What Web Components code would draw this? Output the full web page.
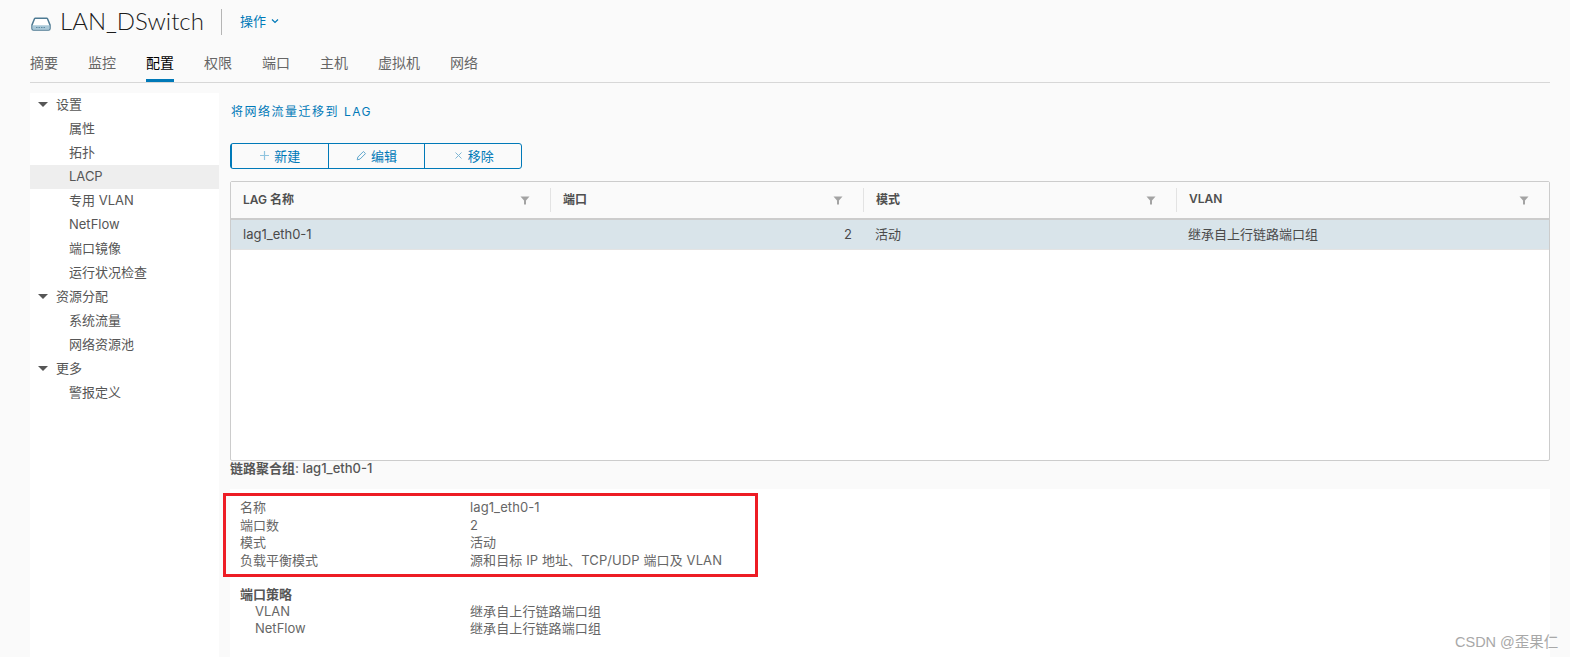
<!DOCTYPE html>
<html lang="zh">
<head>
<meta charset="utf-8">
<title>LAN_DSwitch</title>
<style>
html, body { margin: 0; height: 100%; overflow: hidden; background: #fafafa; }
body { font-family: Inter, "Noto Sans CJK SC", sans-serif; color: #565656; }
</style>
</head>
<body>
<vc-page>
  <vc-header slot="header" title="LAN_DSwitch" action="操作"></vc-header>
  <vc-tabs slot="tabs" items="摘要,监控,配置,权限,端口,主机,虚拟机,网络" active="配置"></vc-tabs>
  <vc-tree slot="side"></vc-tree>
  <vc-lacp slot="main"></vc-lacp>
</vc-page>
<script>
const CJK = 'Inter, "Noto Sans CJK SC", sans-serif';

class VcPage extends HTMLElement {
    constructor() {
        super();
        this.attachShadow({ mode: 'open' }).innerHTML = `
            <style>
            :host { display: block; position: relative; height: 657px; padding-left: 30px; box-sizing: border-box; font-family: ${CJK}; overflow: hidden; }
            .wrap { width: 1520px; }
            .body { display: flex; margin-top: 10px; height: 564px; }
            .wm { position: absolute; left: 1455px; top: 630px; font: 14.500px "Liberation Sans", "Noto Sans CJK SC", sans-serif; color: #a8a8a8; white-space: nowrap; }
            </style>
            <div class="wrap">
                <slot name="header"></slot>
                <slot name="tabs"></slot>
                <div class="body"><slot name="side"></slot><slot name="main"></slot></div>
            </div>
            <div class="wm">CSDN @歪果仁</div>
        `;
    }
}

class VcHeader extends HTMLElement {
    constructor() {
        super();
        this.attachShadow({ mode: 'open' }).innerHTML = `
            <style>
            :host { display: flex; align-items: center; height: 44px; }
            svg.sw { width: 20px; height: 14px; margin: 3px 9px 0 1px; }
            h1 { margin: 0 0 3px; font-family: Lato, Inter, sans-serif; font-size: 24px; font-weight: 300; color: #1b1b1b; width: 161px; line-height: 26px; white-space: nowrap; }
            .sep { width: 1px; height: 26px; background: #b5b5b5; margin-right: 18px; }
            .act { font-size: 13px; color: #0079b8; display: flex; align-items: center; gap: 5px; margin-bottom: 3px; }
            .act svg { width: 8px; height: 6px; }
            </style>
            <svg class="sw" viewBox="0 0 20 14"><path d="M4.500 1.200h11a1 1 0 0 1 1 .6l2.500 6.200v3.500a1.500 1.500 0 0 1-1.500 1.500h-15a1.500 1.500 0 0 1-1.500-1.500V8l2.500-6.200a1 1 0 0 1 1-.6z" fill="#fff" stroke="#4d7a93" stroke-width="1.500"/><path d="M1.500 8.200h17v3.800a.8.800 0 0 1-.8.800H2.300a.8.800 0 0 1-.8-.8z" fill="#a9c8d8"/><path d="M5 10.500h10" stroke="#5f8ba3" stroke-dasharray="1.500 1"/></svg>
            <h1>${this.getAttribute('title')}</h1>
            <div class="sep"></div>
            <div class="act">${this.getAttribute('action')}<svg viewBox="0 0 8 6"><path d="M1 1.500l3 3 3-3" fill="none" stroke="#0079b8" stroke-width="1.200"/></svg></div>
        `;
    }
}

class VcTabs extends HTMLElement {
    constructor() {
        super();
        const active = this.getAttribute('active');
        const tabs = this.getAttribute('items').split(',').map(t =>
            `<div class="tab${t === active ? ' on' : ''}">${t}</div>`).join('');
        this.attachShadow({ mode: 'open' }).innerHTML = `
            <style>
            :host { display: flex; gap: 30px; height: 39px; box-sizing: border-box; border-bottom: 1px solid #d7d7d7; }
            .tab { font-size: 14px; line-height: 38px; height: 38px; box-sizing: border-box; color: #666; }
            .on { color: #000; border-bottom: 3px solid #0079b8; }
            </style>
            ${tabs}
        `;
    }
}

class VcTree extends HTMLElement {
    constructor() {
        super();
        const groups = [
            ['设置', ['属性', '拓扑', 'LACP', '专用 VLAN', 'NetFlow', '端口镜像', '运行状况检查']],
            ['资源分配', ['系统流量', '网络资源池']],
            ['更多', ['警报定义']],
        ];
        const html = groups.map(([name, kids]) => `
            <div class="row group"><i></i>${name}</div>
            ${kids.map(k => `<div class="row kid${k === 'LACP' ? ' sel' : ''}">${k}</div>`).join('')}
        `).join('');
        this.attachShadow({ mode: 'open' }).innerHTML = `
            <style>
            :host { display: block; width: 189px; flex: none; background: #fff; font-size: 13px; color: #565656; }
            .row { height: 24px; line-height: 22px; white-space: nowrap; display: flex; align-items: flex-start; }
            .group { padding-left: 8px; }
            .group i { width: 0; height: 0; margin-top: 9px; border: 5px solid transparent; border-top: 5px solid #565656; border-bottom: 0; margin-right: 8px; }
            .kid { padding-left: 39px; }
            .sel { background: #eee; }
            </style>
            ${html}
        `;
    }
}

class VcButtons extends HTMLElement {
    constructor() {
        super();
        this.attachShadow({ mode: 'open' }).innerHTML = `
            <style>
            :host { display: flex; width: 290px; box-sizing: content-box; height: 24px; border: 1px solid #0079b8; border-radius: 3px; background: #fafafa; }
            .b { flex: 1; display: flex; align-items: center; justify-content: center; gap: 4px; padding-bottom: 2px; font-size: 13px; color: #0079b8; border-left: 1px solid #0079b8; }
            .b:first-child { border-left: 0; }
            svg { width: 11px; height: 11px; }
            </style>
            <div class="b"><svg viewBox="0 0 11 11"><path d="M5.500 1v9M1 5.500h9" stroke="#8fc4df" stroke-width="1.200"/></svg>新建</div>
            <div class="b"><svg viewBox="0 0 11 11"><path d="M1.200 9.800l.7-2.800 5.500-5.500 2.100 2.100-5.500 5.500z" fill="none" stroke="#5ea6cc"/></svg>编辑</div>
            <div class="b"><svg viewBox="0 0 11 11"><path d="M2.500 2.500l6 6M8.500 2.500l-6 6" stroke="#7fb6d4"/></svg>移除</div>
        `;
    }
}

class VcGrid extends HTMLElement {
    constructor() {
        super();
        const filter = `<svg viewBox="0 0 10 9"><path d="M.5.500h9L6 4.500V8.500H4V4.500z" fill="#a3a3a3"/></svg>`;
        const head = ['LAG 名称', '端口', '模式', 'VLAN'].map(t =>
            `<div class="h"><span>${t}</span>${filter}</div>`).join('');
        this.attachShadow({ mode: 'open' }).innerHTML = `
            <style>
            :host { display: block; height: 280px; box-sizing: border-box; border: 1px solid #ccc; border-radius: 2px; background: #fff; font-size: 13px; color: #565656; }
            .row { display: grid; grid-template-columns: 319px 313px 313px 1fr; }
            .head { height: 38px; box-sizing: border-box; background: #fafafa; border-bottom: 2px solid #ccc; align-items: center; }
            .h { height: 24px; box-sizing: border-box; display: flex; align-items: center; justify-content: space-between; padding: 0 20px 3px 12px; border-left: 1px solid #e3e3e3; font-size: 12px; font-weight: 600; color: #4f4f4f; }
            .h:first-child { border-left: 0; padding-left: 12px; }
            .h svg { width: 10px; height: 9px; margin-top: 3px; }
            .body { height: 30px; line-height: 29px; background: #d9e4ea; border-bottom: 1px solid #e3e3e3; box-sizing: border-box; }
            .c { padding: 0 12px; white-space: nowrap; color: #4a4a4a; }
            .num { text-align: right; padding-right: 11px; }
            </style>
            <div class="row head">${head}</div>
            <div class="row body">
                <div class="c">lag1_eth0-1</div>
                <div class="c num">2</div>
                <div class="c">活动</div>
                <div class="c">继承自上行链路端口组</div>
            </div>
        `;
    }
}

class VcDetails extends HTMLElement {
    constructor() {
        super();
        const rows = [
            ['名称', 'lag1_eth0-1'],
            ['端口数', '2'],
            ['模式', '活动'],
            ['负载平衡模式', '源和目标 IP 地址、TCP/UDP 端口及 VLAN'],
        ];
        const row = (k, v, cls = '') => `<div class="r ${cls}"><div>${k}</div><div class="v">${v}</div></div>`;
        this.attachShadow({ mode: 'open' }).innerHTML = `
            <style>
            :host { display: block; position: relative; background: #fff; flex: 1; padding: 10px 10px 0; font-size: 13px; color: #666; }
            .r { display: grid; grid-template-columns: 230px 1fr; height: 17.700px; line-height: 17.700px; white-space: nowrap; }
            .v { letter-spacing: .1px; }
            .title { margin-top: 15px; height: 18px; line-height: 18px; font-weight: 600; color: #565656; }
            .sub { padding-left: 15px; grid-template-columns: 215px 1fr; }
            .mark { position: absolute; left: -7px; top: 4px; width: 535px; height: 84px; box-sizing: border-box; border: 3px solid #ed1c24; }
            </style>
            ${rows.map(r => row(r[0], r[1])).join('')}
            <div class="title">端口策略</div>
            ${row('VLAN', '继承自上行链路端口组', 'sub')}
            ${row('NetFlow', '继承自上行链路端口组', 'sub')}
            <div class="mark"></div>
        `;
    }
}

class VcLacp extends HTMLElement {
    constructor() {
        super();
        this.attachShadow({ mode: 'open' }).innerHTML = `
            <style>
            :host { display: flex; flex-direction: column; flex: 1; padding-left: 11px; min-width: 0; }
            .link { margin: 10px 0 0 1px; height: 17px; line-height: 17px; font-size: 12px; letter-spacing: 1.500px; color: #0079b8; }
            vc-buttons { margin-top: 23px; }
            vc-grid { margin-top: 12px; }
            .cap { height: 28px; line-height: 15px; font-size: 13px; font-weight: 500; color: #565656; }
            .cap b { font-weight: 700; }
            </style>
            <div class="link">将网络流量迁移到 LAG</div>
            <vc-buttons></vc-buttons>
            <vc-grid></vc-grid>
            <div class="cap"><b>链路聚合组</b>: lag1_eth0-1</div>
            <vc-details></vc-details>
        `;
    }
}

customElements.define('vc-page', VcPage);
customElements.define('vc-header', VcHeader);
customElements.define('vc-tabs', VcTabs);
customElements.define('vc-tree', VcTree);
customElements.define('vc-buttons', VcButtons);
customElements.define('vc-grid', VcGrid);
customElements.define('vc-details', VcDetails);
customElements.define('vc-lacp', VcLacp);
</script>
</body>
</html>
